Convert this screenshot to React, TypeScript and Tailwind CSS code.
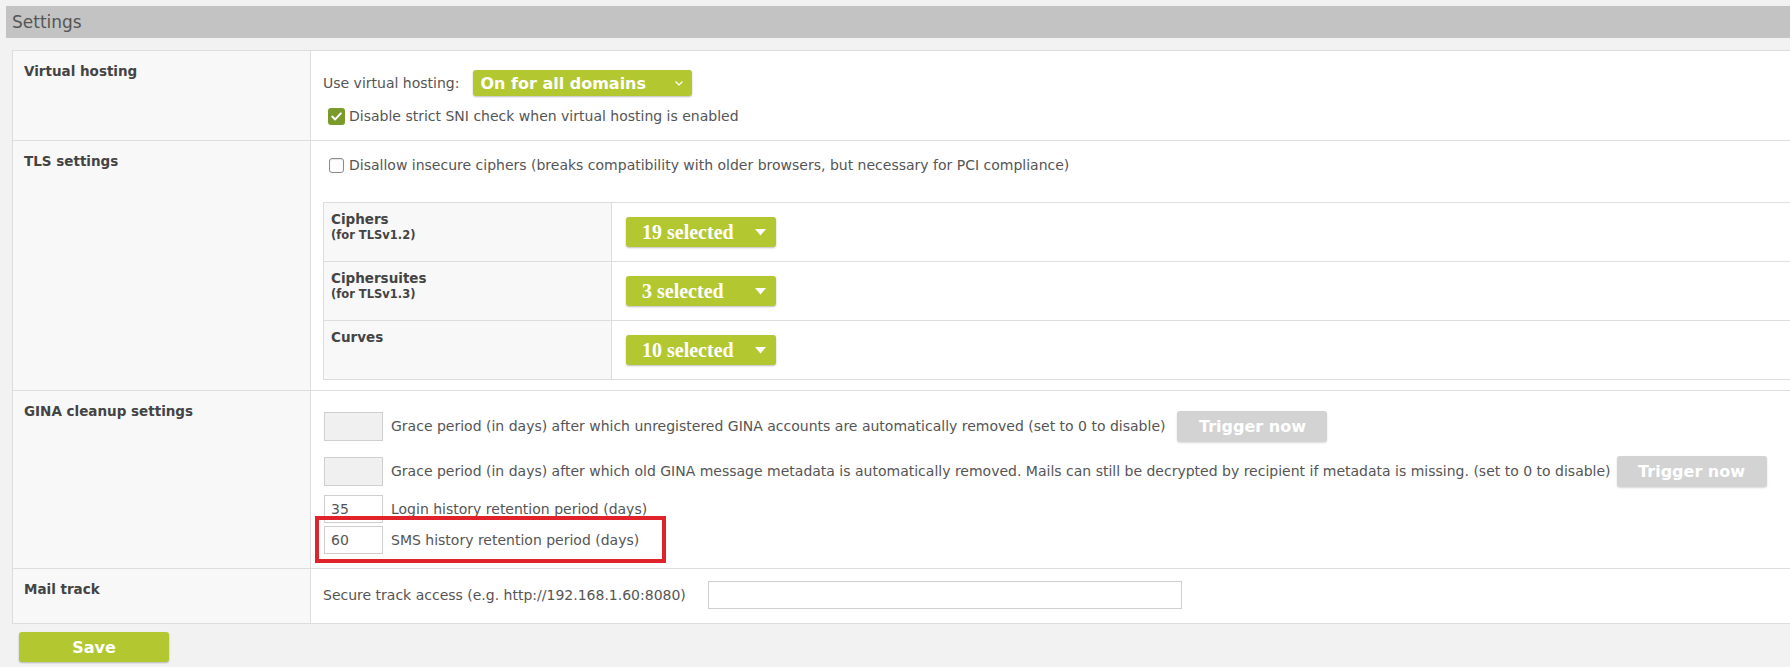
import React from "react";

const green = "bg-[#b3c731]";

function Caret() {
  return (
    <svg width="11" height="7" viewBox="0 0 11 7" className="shrink-0">
      <path d="M0 0 L11 0 L5.5 6.5 Z" fill="#ffffff" />
    </svg>
  );
}

function Chevron() {
  return (
    <svg width="8" height="5" viewBox="0 0 8 5" className="shrink-0">
      <path d="M0.5 0.5 L4 4 L7.5 0.5" fill="none" stroke="#ffffff" strokeWidth="1.2" />
    </svg>
  );
}

function MultiSelect({ label }: { label: string }) {
  return (
    <div
      className={`${green} w-[150px] h-[30px] rounded-[3px] shadow-[0_1px_2px_rgba(0,0,0,0.25)] flex items-center justify-between pl-[16px] pr-[10px] text-white font-bold text-[20px] font-['Liberation_Serif',serif]`}
    >
      <span>{label}</span>
      <Caret />
    </div>
  );
}

function TriggerButton() {
  return (
    <div className="w-[150px] h-[31px] rounded-[3px] bg-[#d3d3d3] shadow-[0_1px_2px_rgba(0,0,0,0.15)] flex items-center justify-center text-white font-bold text-[16px] shrink-0">
      Trigger now
    </div>
  );
}

function NumInput({ value, disabled, h }: { value?: string; disabled?: boolean; h: string }) {
  return (
    <div
      className={`w-[59px] ${h} shrink-0 border border-[#cfcfcf] ${disabled ? "bg-[#f0f0f0]" : "bg-white"} flex items-center pl-[6px] text-[14px] text-[#555]`}
    >
      {value}
    </div>
  );
}

const labelCls =
  "w-[298px] shrink-0 bg-[#f8f8f8] border-r border-[#dddddd] pl-[11px] pt-[12px] font-bold text-[13.5px] text-[#444]";

export default function App() {
  return (
    <div className="w-[1790px] h-[667px] overflow-hidden bg-[#f2f2f2] pt-[6px] font-['DejaVu_Sans',Verdana,sans-serif] text-[14px] leading-[17px] text-[#555]">
      {/* Header */}
      <div className="ml-[6px] h-[32px] bg-[#c3c3c3] flex items-center pl-[6px] text-[17px] text-[#555]">
        Settings
      </div>

      {/* Table */}
      <div className="ml-[12px] mt-[12px] w-[1800px] border-t border-l border-[#dddddd] bg-white">
        {/* Virtual hosting */}
        <div className="flex h-[90px] border-b border-[#dddddd]">
          <div className={labelCls}>Virtual hosting</div>
          <div className="flex-1 pl-[12px] pt-[19px]">
            <div className="flex items-center gap-[14px]">
              <span>Use virtual hosting:</span>
              <div
                className={`${green} w-[219px] h-[26px] rounded-[3px] shadow-[0_1px_2px_rgba(0,0,0,0.25)] flex items-center justify-between pl-[7px] pr-[9px] text-white font-bold text-[16px]`}
              >
                <span>On for all domains</span>
                <Chevron />
              </div>
            </div>
            <div className="flex items-center gap-[4px] mt-[12px] ml-[5px]">
              <div className="w-[17px] h-[17px] rounded-[3px] bg-[#7b9a2c] flex items-center justify-center">
                <svg width="11" height="9" viewBox="0 0 11 9">
                  <path d="M1.2 4.6 L4.2 7.4 L9.8 1.4" fill="none" stroke="#ffffff" strokeWidth="2" strokeLinecap="round" strokeLinejoin="round" />
                </svg>
              </div>
              <span>Disable strict SNI check when virtual hosting is enabled</span>
            </div>
          </div>
        </div>

        {/* TLS settings */}
        <div className="flex h-[250px] border-b border-[#dddddd]">
          <div className={labelCls}>TLS settings</div>
          <div className="flex-1 pl-[12px] pt-[16px]">
            <div className="flex items-center gap-[5px] ml-[6px]">
              <div className="w-[15px] h-[15px] rounded-[3px] border border-[#8a8a8a] bg-white shadow-[inset_0_1px_1px_rgba(0,0,0,0.1)]" />
              <span>Disallow insecure ciphers (breaks compatibility with older browsers, but necessary for PCI compliance)</span>
            </div>
            <div className="mt-[28px] border-t border-l border-[#dddddd]">
              {[
                { name: "Ciphers", sub: "(for TLSv1.2)", val: "19 selected" },
                { name: "Ciphersuites", sub: "(for TLSv1.3)", val: "3 selected" },
                { name: "Curves", sub: "", val: "10 selected" },
              ].map((r) => (
                <div key={r.name} className="flex h-[59px] border-b border-[#dddddd]">
                  <div className="w-[288px] shrink-0 bg-[#f8f8f8] border-r border-[#dddddd] pl-[7px] pt-[7px] text-[#444] font-bold">
                    <div className="text-[13.5px] leading-[18px]">{r.name}</div>
                    {r.sub && <div className="text-[11.5px] leading-[15px]">{r.sub}</div>}
                  </div>
                  <div className="flex-1 pl-[14px] pt-[14px]">
                    <MultiSelect label={r.val} />
                  </div>
                </div>
              ))}
            </div>
          </div>
        </div>

        {/* GINA cleanup settings */}
        <div className="flex h-[178px] border-b border-[#dddddd]">
          <div className={labelCls}>GINA cleanup settings</div>
          <div className="flex-1 pl-[13px] pt-[20px]">
            <div className="flex items-center">
              <NumInput disabled h="h-[29px]" />
              <span className="ml-[8px]">
                Grace period (in days) after which unregistered GINA accounts are automatically removed (set to 0 to disable)
              </span>
              <div className="ml-[12px]">
                <TriggerButton />
              </div>
            </div>
            <div className="flex items-center mt-[14px]">
              <NumInput disabled h="h-[29px]" />
              <span className="ml-[8px]">
                Grace period (in days) after which old GINA message metadata is automatically removed. Mails can still be decrypted by recipient if metadata is missing. (set to 0 to disable)
              </span>
              <div className="ml-[6px]">
                <TriggerButton />
              </div>
            </div>
            <div className="flex items-center mt-[8px]">
              <NumInput value="35" h="h-[28px]" />
              <span className="ml-[8px]">Login history retention period (days)</span>
            </div>
            <div className="relative flex items-center mt-[3px]">
              <NumInput value="60" h="h-[28px]" />
              <span className="ml-[8px]">SMS history retention period (days)</span>
              <div className="absolute left-[-9px] top-[-10px] w-[351px] h-[47px] border-[4px] border-[#e0232b] pointer-events-none" />
            </div>
          </div>
        </div>

        {/* Mail track */}
        <div className="flex h-[55px] border-b border-[#dddddd]">
          <div className={labelCls}>Mail track</div>
          <div className="flex-1 pl-[12px] pt-[12px] flex items-start">
            <div className="flex items-center gap-[22px]">
              <span>Secure track access (e.g. http://192.168.1.60:8080)</span>
              <div className="w-[474px] h-[28px] border border-[#cfcfcf] bg-white" />
            </div>
          </div>
        </div>
      </div>

      {/* Save */}
      <div className="ml-[19px] mt-[8px]">
        <div
          className={`${green} w-[150px] h-[30px] rounded-[3px] shadow-[0_1px_2px_rgba(0,0,0,0.25)] flex items-center justify-center text-white font-bold text-[16px]`}
        >
          Save
        </div>
      </div>
    </div>
  );
}
